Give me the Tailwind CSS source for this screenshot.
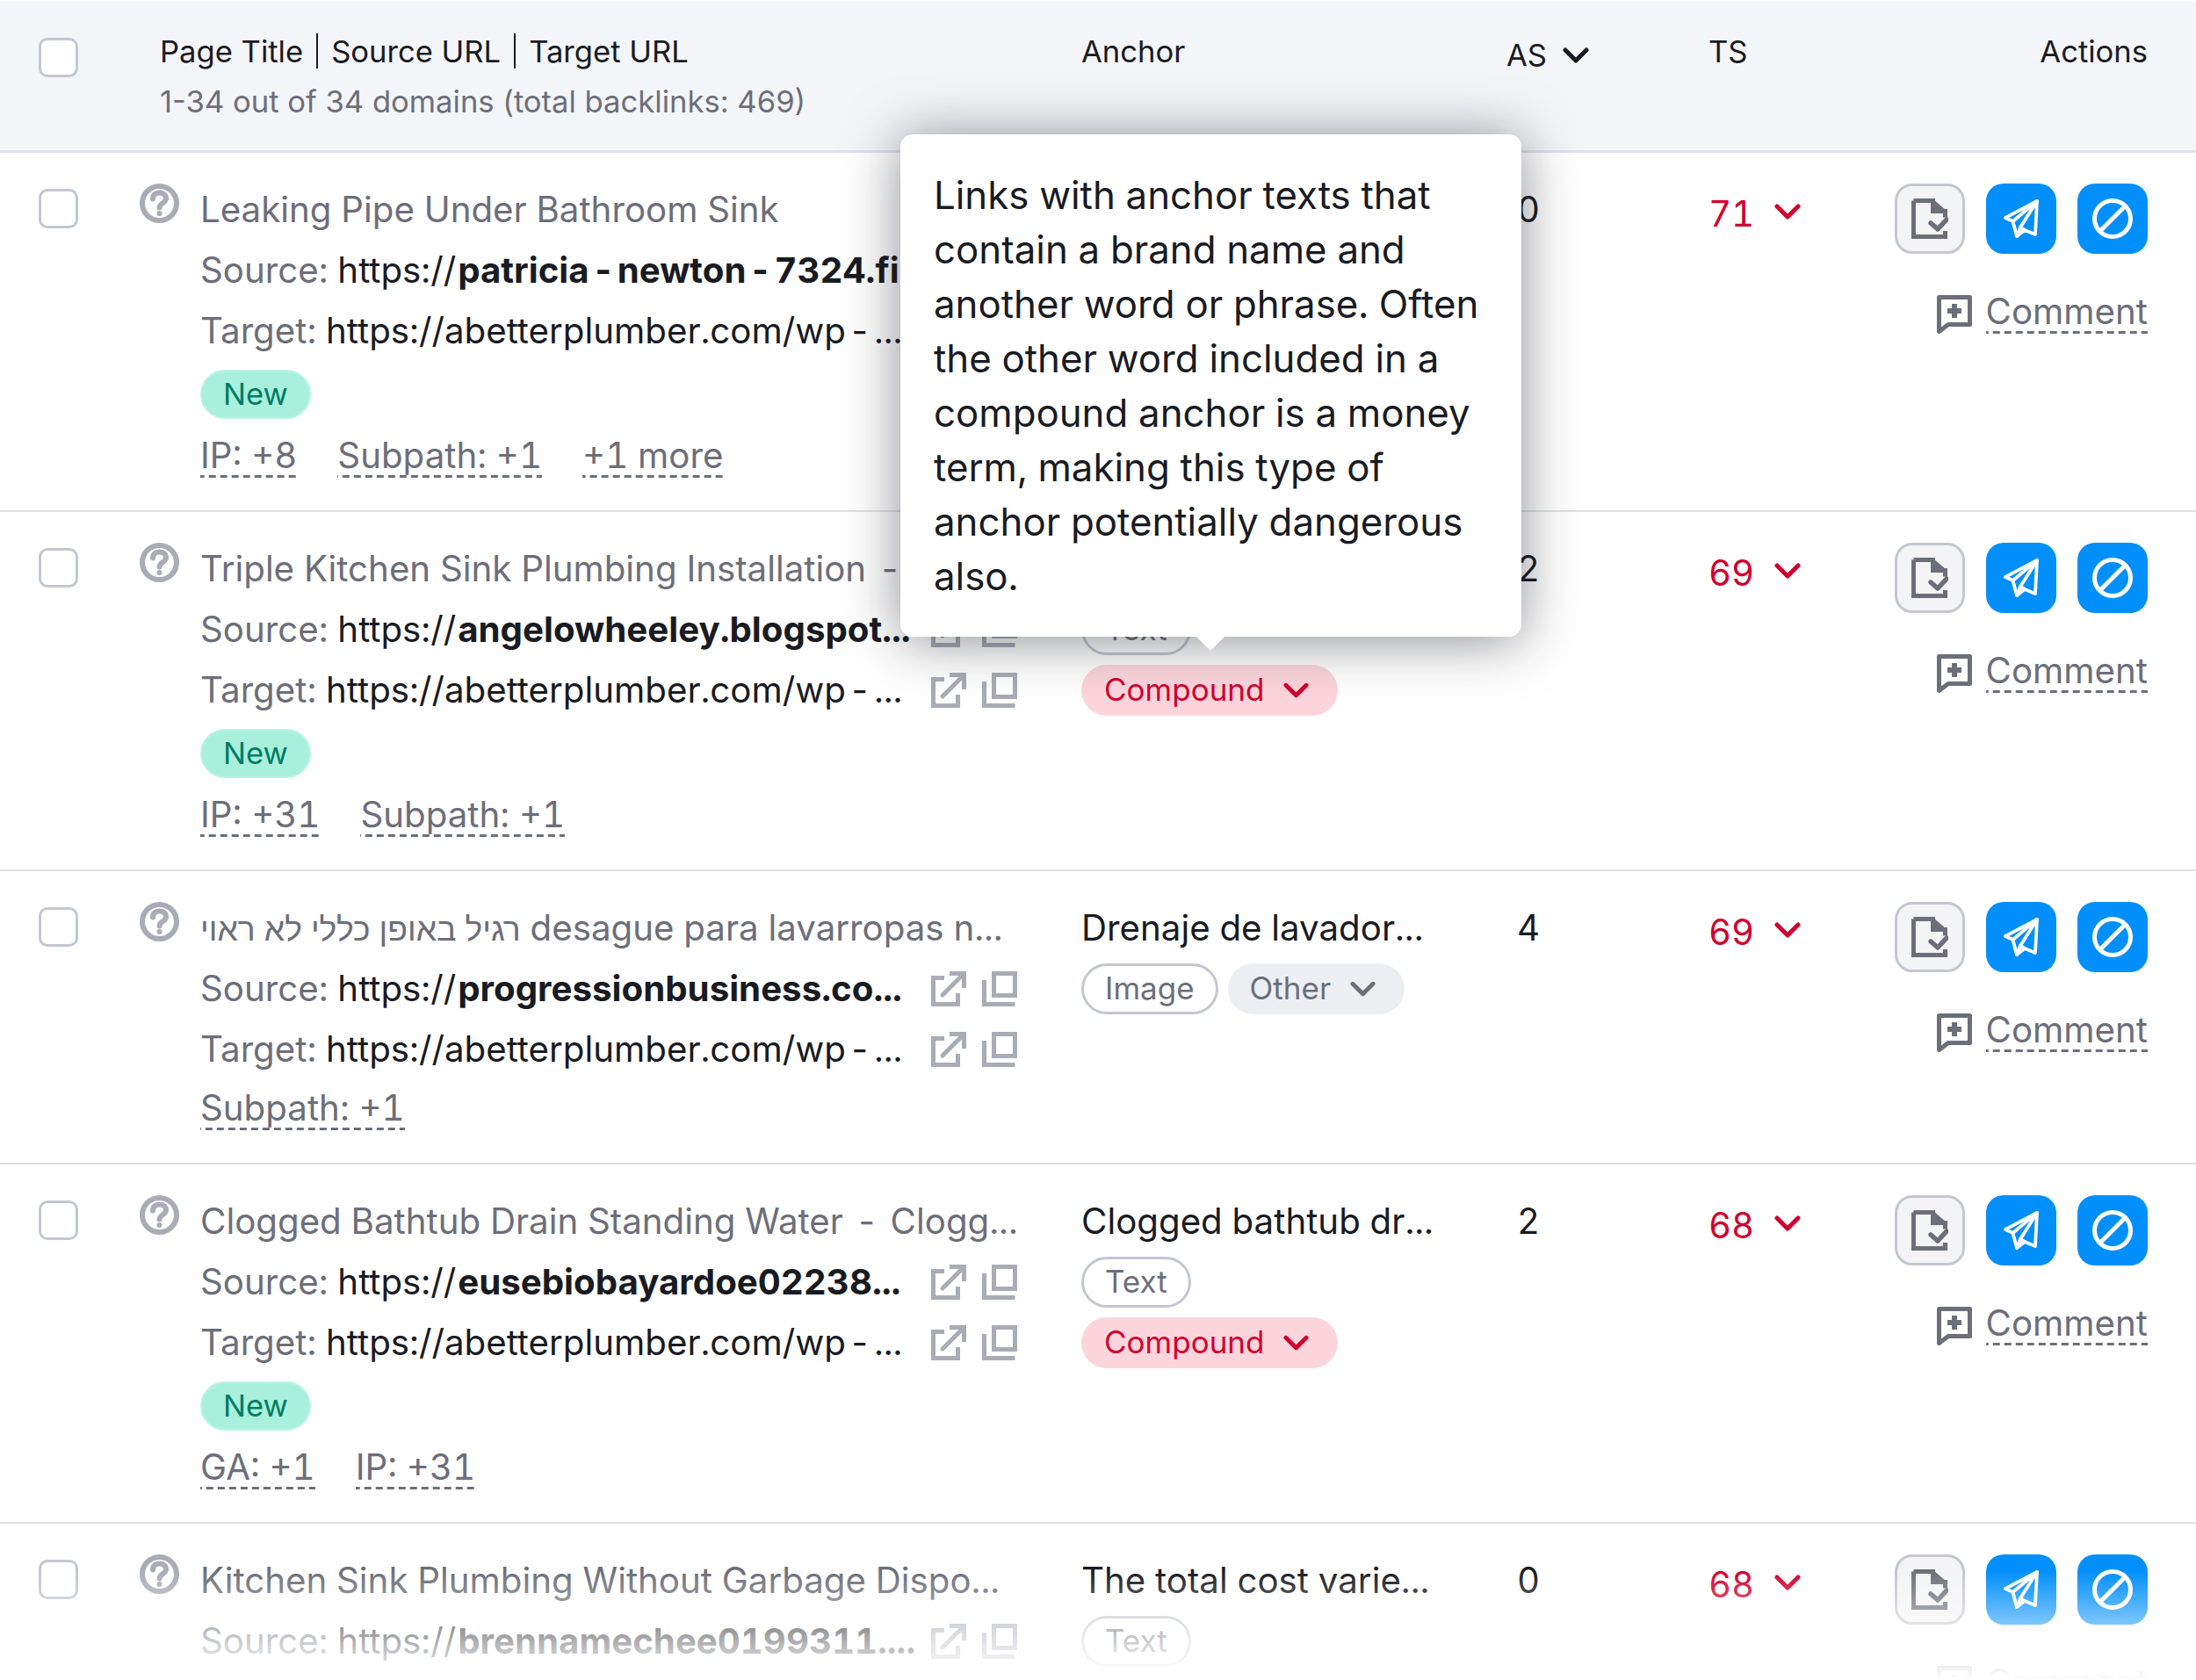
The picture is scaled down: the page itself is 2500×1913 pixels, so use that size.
<!DOCTYPE html>
<html lang="en">
<head>
<meta charset="UTF-8" />
<title>Backlink Audit</title>
<script src="https://cdn.jsdelivr.net/npm/@tailwindcss/browser@4"></script>
</head>
<body class="bg-white font-[family-name:Inter,Liberation_Sans,sans-serif] text-[40.25px] text-[#191b23] tabular-nums overflow-hidden">
<div class="relative w-[2500px] h-[1913px] overflow-hidden pt-[2px]">

  <!-- Table header -->
  <div class="flex h-[172px] bg-[#f4f5f9] border-b-[3px] border-[#e0e1e9] text-[34.6px] normal-nums">
    <div class="w-[159px] pl-[44px] pt-[41px] shrink-0">
      <div class="w-[45px] h-[45px] rounded-[10px] border-[3px] border-[#c4c7cf] bg-white"></div>
    </div>
    <div class="w-[1072px] pl-[23px] shrink-0">
      <div class="flex items-center h-[40px] mt-[36px] gap-[15px] leading-none">
        <span>Page Title</span><i class="w-[2px] h-[40px] bg-[#191b23]"></i>
        <span>Source URL</span><i class="w-[2px] h-[40px] bg-[#191b23]"></i>
        <span>Target URL</span>
      </div>
      <div class="mt-[17px] leading-[40px] text-[#6c6e79]">1-34 out of 34 domains (total backlinks: 469)</div>
    </div>
    <div class="w-[484px] pt-[36px] leading-[40px] shrink-0">Anchor</div>
    <div class="w-[230px] pt-[40px] shrink-0 flex items-start gap-[18px] leading-[40px]">
      <span>AS</span>
      <svg class="mt-[11px]" width="30" height="20" viewBox="0 0 30 20" fill="none" stroke="#191b23" stroke-width="5" stroke-linecap="round" stroke-linejoin="round"><path d="M3 4l12 12L27 4"/></svg>
    </div>
    <div class="w-[212px] pt-[36px] leading-[40px] shrink-0">TS</div>
    <div class="w-[288px] pt-[36px] leading-[40px] text-right shrink-0">Actions</div>
  </div>

  <div id="rows"></div>

  <!-- Tooltip over the Compound pill -->
  <div class="absolute left-[1025px] top-[153px] w-[707px] h-[572px] bg-white rounded-[14px] shadow-[0_4px_62px_rgba(25,27,35,0.5)] pl-[38px] pt-[39px] text-[43.8px] leading-[62px]">
    Links with anchor texts that<br>contain a brand name and<br>another word or phrase. Often<br>the other word included in a<br>compound anchor is a money<br>term, making this type of<br>anchor potentially dangerous<br>also.
    <div class="absolute left-[337px] top-[572px] w-0 h-0 border-x-[16px] border-x-transparent border-t-[16px] border-t-white"></div>
  </div>

  <!-- Bottom fade -->
  <div class="absolute left-0 right-0 bottom-0 h-[125px] bg-gradient-to-b from-white/0 to-white"></div>
</div>

<script>
  const chevron = (color, w = 30) => `<svg width="${w}" height="20" viewBox="0 0 30 20" fill="none" stroke="${color}" stroke-width="5" stroke-linecap="round" stroke-linejoin="round"><path d="M3 4l12 12L27 4"/></svg>`;

  const questionIcon = `<svg width="45" height="45" viewBox="0 0 45 45" fill="none" stroke="#a9abb6" stroke-width="6"><circle cx="22.500" cy="22.500" r="19.500"/><path d="M15 17.500c0-4.500 3-7 7.500-7s7.500 2.500 7.500 6.500c0 5.500-7.500 5-7.500 10.500" stroke-linecap="round"/><circle cx="22.500" cy="34" r="3" fill="#a9abb6" stroke="none"/></svg>`;

  const linkIcons = `<div class="flex gap-[18px] shrink-0">
    <svg width="40" height="40" viewBox="0 0 40 40" fill="none" stroke="#a9abb6" stroke-width="5"><path d="M15 7.500H2.500v30h28V25"/><path d="M13 27L35 5" stroke-linecap="round"/><path d="M21 2.500h16.500V19"/></svg>
    <svg width="40" height="40" viewBox="0 0 40 40" fill="none" stroke="#a9abb6" stroke-width="5"><path d="M2.500 10v27.500h35"/><rect x="13.500" y="2.500" width="24" height="25"/></svg>
  </div>`;

  const docBtn = `<button class="w-[80px] h-[80px] rounded-[20px] border-[3px] border-[#c4c7cf] bg-[#f4f4f6] flex items-center justify-center">
    <svg width="42" height="46" viewBox="0 0 42 46" fill="none"><path d="M2.500 2.500h22v12h14v7M38.500 37v6.500h-36v-41" stroke="#6c6e79" stroke-width="5"/><path d="M25 1l15 13H25z" fill="#6c6e79"/><path d="M22 28l8 7 10-11" stroke="#6c6e79" stroke-width="5.500" stroke-linecap="round" stroke-linejoin="round"/></svg>
  </button>`;
  const sendBtn = `<button class="w-[80px] h-[80px] rounded-[20px] bg-[#008ffb] flex items-center justify-center">
    <svg width="40" height="44" viewBox="0 0 40 44" fill="none" stroke="#fff" stroke-width="3.800" stroke-linejoin="round" stroke-linecap="round"><path d="M38 2L2 21l8.500 4L15 42l9-7 12 5z"/><path d="M10.500 25L38 2 19 32l5 3"/><path d="M19 32l-4 10"/></svg>
  </button>`;
  const banBtn = `<button class="w-[80px] h-[80px] rounded-[20px] bg-[#008ffb] flex items-center justify-center">
    <svg width="46" height="46" viewBox="0 0 46 46" fill="none" stroke="#fff" stroke-width="5"><circle cx="23" cy="23" r="20.500"/><path d="M9 37L37 9"/></svg>
  </button>`;
  const commentIcon = `<svg width="40" height="44" viewBox="0 0 40 44" fill="none"><path d="M2.500 2.500h35v31H13l-10.500 8z" stroke="#6c6e79" stroke-width="5" stroke-linejoin="round"/><path d="M20 10v16M12 18h16" stroke="#6c6e79" stroke-width="6"/></svg>`;

  const dash = '<span class="mx-[3px]">-</span>';
  const targetUrl = `https://abetterplumber.com/wp${dash}...`;

  const rows = [
    { h: 'h-[409px]', title: 'Leaking Pipe Under Bathroom Sink', source: `patricia${dash}newton${dash}7324.fi...`, target: targetUrl, isNew: true, links: ['IP: +8', 'Subpath: +1', '+1 more'], anchor: '', pills: [], as: '0', ts: '71' },
    { h: 'h-[409px]', title: `Triple Kitchen Sink Plumbing Installation ${dash}`, source: 'angelowheeley.blogspot...', target: targetUrl, isNew: true, links: ['IP: +31', 'Subpath: +1'], anchor: '', pills: ['Text', 'Compound'], as: '2', ts: '69' },
    { h: 'h-[334px]', title: '<span class="text-[37.3px]">רגיל באופן כללי לא ראוי</span> desague para lavarropas n...', source: 'progressionbusiness.co...', target: targetUrl, links: ['Subpath: +1'], anchor: 'Drenaje de lavador...', pills: ['Image', 'Other'], as: '4', ts: '69' },
    { h: 'h-[409px]', title: `Clogged Bathtub Drain Standing Water ${dash} Clogg...`, source: 'eusebiobayardoe02238...', target: targetUrl, isNew: true, links: ['GA: +1', 'IP: +31'], anchor: 'Clogged bathtub dr...', pills: ['Text', 'Compound'], as: '2', ts: '68' },
    { h: 'h-[409px]', title: 'Kitchen Sink Plumbing Without Garbage Dispo...', source: 'brennamechee0199311....', target: '', links: [], anchor: 'The total cost varie...', pills: ['Text', 'Compound'], as: '0', ts: '68' },
  ];

  const pill = name => {
    if (name === 'Compound') return `<span class="inline-flex items-center gap-[22px] h-[58px] pl-[26px] pr-[33px] rounded-full bg-[#fcd5dc] text-[#d1002f] text-[35px]">Compound ${chevron('#d1002f', 29)}</span>`;
    if (name === 'Other') return `<span class="inline-flex items-center gap-[22px] h-[58px] pl-[25px] pr-[33px] rounded-full bg-[#edeef1] text-[#6c6e79] text-[35px]">Other ${chevron('#6c6e79', 29)}</span>`;
    return `<span class="inline-flex items-center h-[58px] px-[24px] rounded-full border-[3px] border-[#c4c7cf] bg-white text-[#6c6e79] text-[35px]">${name}</span>`;
  };

  const dashed = text => `<span class="inline-block leading-[44px] pb-[3px] text-[#6c6e79] bg-[linear-gradient(90deg,#6c6e79_8px,transparent_8px)] bg-[length:13px_3px] bg-repeat-x bg-bottom">${text}</span>`;

  document.getElementById('rows').innerHTML = rows.map(r => `
    <div class="flex ${r.h} border-b-[2px] border-[#e0e1e9]">
      <div class="w-[159px] pl-[44px] pt-[41px] shrink-0">
        <div class="w-[45px] h-[45px] rounded-[10px] border-[3px] border-[#c4c7cf] bg-white"></div>
      </div>
      <div class="w-[1072px] shrink-0 flex pt-[33px]">
        <div class="w-[69px] shrink-0 mt-[2px]">${questionIcon}</div>
        <div class="w-[930px]">
          <div class="h-[69px] leading-[69px] whitespace-nowrap text-[#6c6e79] -mt-[3px]">${r.title}</div>
          <div class="h-[69px] flex items-center justify-between w-[930px]">
            <div class="whitespace-nowrap pt-[2px]"><span class="text-[#6c6e79]">Source:</span> https://<b class="font-bold ml-[2px]">${r.source}</b></div>${linkIcons}
          </div>
          ${r.target ? `<div class="h-[69px] flex items-center justify-between w-[930px]">
            <div class="whitespace-nowrap pt-[2px]"><span class="text-[#6c6e79]">Target:</span> ${r.target}</div>${linkIcons}
          </div>` : ''}
          ${r.isNew ? `<div class="h-[75px] flex items-center"><span class="inline-flex items-center h-[56px] px-[24px] rounded-full bg-[#a8f0dc] border-[2px] border-[#b8f4e3] text-[#007c65] text-[34.6px]">New</span></div>` : ''}
          ${r.links.length ? `<div class="h-[69px] flex items-center gap-[46px]">${r.links.map(dashed).join('')}</div>` : ''}
        </div>
      </div>
      <div class="w-[484px] shrink-0 pt-[30px]">
        <div class="h-[69px] leading-[69px] whitespace-nowrap">${r.anchor}</div>
        ${r.pills.length === 2 && r.pills[0] !== 'Image'
          ? r.pills.map(p => `<div class="h-[69px] flex items-center">${pill(p)}</div>`).join('')
          : `<div class="h-[69px] flex items-center gap-[11px]">${r.pills.map(pill).join('')}</div>`}
      </div>
      <div class="w-[230px] shrink-0 pt-[30px] pl-[12px] leading-[69px]">${r.as}</div>
      <div class="w-[212px] shrink-0 pt-[35px] flex items-start gap-[23px] text-[#d1002f] leading-[69px]">
        <span>${r.ts}</span><span class="mt-[22px]">${chevron('#d1002f')}</span>
      </div>
      <div class="w-[288px] shrink-0 pt-[35px] flex flex-col items-end">
        <div class="flex gap-[24px]">${docBtn}${sendBtn}${banBtn}</div>
        <div class="flex items-start gap-[16px] mt-[47px]">${commentIcon}<span class="-mt-[11px]">${dashed('Comment')}</span></div>
      </div>
    </div>`).join('');
</script>
</body>
</html>
